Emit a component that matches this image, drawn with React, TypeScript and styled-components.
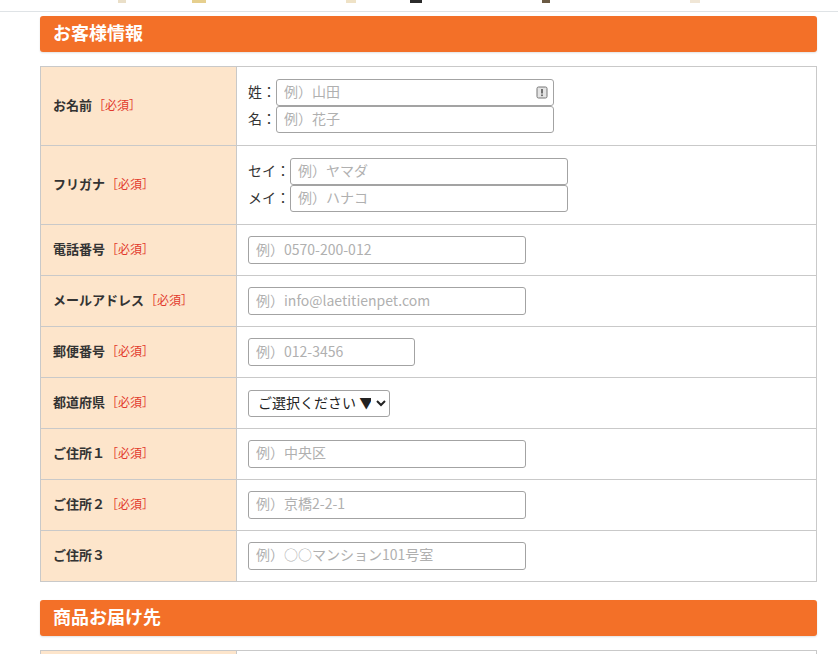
import React from "react";
import styled, { createGlobalStyle } from "styled-components";

const GlobalStyle = createGlobalStyle`
  html, body { margin: 0; padding: 0; background: #fff; }
  body {
    font-family: "Noto Sans CJK JP", "Noto Sans", "Liberation Sans", sans-serif;
    color: #333;
  }
  * { box-sizing: border-box; }
`;

const Page = styled.div`
  width: 838px;
  overflow: hidden;
`;

const TopStrip = styled.div`
  height: 12px;
  border-bottom: 1px solid #dfe3e6;
  display: flex;
  align-items: flex-start;
`;

const StripMark = styled.span<{ $left: number; $w: number; $c: string }>`
  margin-left: ${(p) => p.$left}px;
  width: ${(p) => p.$w}px;
  height: 3px;
  background: ${(p) => p.$c};
  flex: none;
`;

const Content = styled.div`
  padding: 4px 21px 0 40px;
  display: flex;
  flex-direction: column;
`;

const SectionTitle = styled.h2<{ $mt: number }>`
  margin: ${(p) => p.$mt}px 0 14px;
  height: 36px;
  background: #f37028;
  border-radius: 3px;
  color: #fff;
  font-size: 18px;
  font-weight: 700;
  line-height: 33px;
  padding-left: 13px;
  box-shadow: 0 1px 2px rgba(0, 0, 0, 0.12);
`;

const FormTable = styled.table`
  width: 777px;
  border-collapse: collapse;
  border: 1px solid #c9c9c9;
`;

const Th = styled.th`
  width: 196px;
  background: #fde5cb;
  border: 1px solid #c9c9c9;
  text-align: left;
  padding: 0 12px 3px;
  font-size: 13px;
  font-weight: 700;
  color: #333;
  white-space: nowrap;
`;

const Required = styled.span`
  color: #e2392c;
  font-weight: 400;
  font-size: 12px;
  margin-left: 1px;
`;

const Td = styled.td`
  border: 1px solid #c9c9c9;
  padding: 11px 11px;
  vertical-align: middle;
`;

const Stack = styled.div`
  display: grid;
  grid-template-columns: auto auto;
  justify-content: start;
  align-items: center;
  padding: 1px 0;
`;

const SubLabel = styled.span`
  font-size: 14px;
  color: #333;
  white-space: nowrap;
  padding-bottom: 3px;
`;

const FieldWrap = styled.div`
  position: relative;
  width: 278px;
`;

const TextInput = styled.input<{ $w?: number; $h?: number }>`
  display: block;
  width: ${(p) => p.$w ?? 278}px;
  height: ${(p) => p.$h ?? 28}px;
  border: 1px solid #a3a3a3;
  border-radius: 3px;
  padding: 0 7px 3px;
  font-family: inherit;
  font-size: 14px;
  color: #333;
  background: #fff;
  &::placeholder { color: #b0b0b0; }
`;

const AutofillIcon = styled.svg`
  position: absolute;
  right: 6px;
  top: 7px;
`;

const Select = styled.select`
  height: 27px;
  width: 142px;
  border: 1px solid #a3a3a3;
  border-radius: 3px;
  font-family: inherit;
  font-size: 14px;
  color: #222;
  background: #fff;
  padding: 0 2px 2px 5px;
`;

type Row = {
  label: string;
  req: boolean;
  ph: string;
  w?: number;
  kind?: "text" | "select";
};

const rows: Row[] = [
  { label: "電話番号", req: true, ph: "例）0570-200-012" },
  { label: "メールアドレス", req: true, ph: "例）info@laetitienpet.com" },
  { label: "郵便番号", req: true, ph: "例）012-3456", w: 167 },
  { label: "都道府県", req: true, ph: "", kind: "select" },
  { label: "ご住所１", req: true, ph: "例）中央区" },
  { label: "ご住所２", req: true, ph: "例）京橋2-2-1" },
  { label: "ご住所３", req: false, ph: "例）○○マンション101号室" },
];

const Req = () => <Required>［必須］</Required>;

export default function App() {
  return (
    <Page>
      <GlobalStyle />
      <TopStrip>
        <StripMark $left={118} $w={8} $c="#eadfc8" />
        <StripMark $left={66} $w={14} $c="#e6cf8e" />
        <StripMark $left={140} $w={10} $c="#efe2c6" />
        <StripMark $left={54} $w={12} $c="#2b2b2b" />
        <StripMark $left={120} $w={8} $c="#6b5a44" />
        <StripMark $left={140} $w={10} $c="#f0e6d6" />
      </TopStrip>
      <Content>
        <SectionTitle $mt={0}>お客様情報</SectionTitle>
        <FormTable>
          <tbody>
            <tr>
              <Th>
                お名前<Req />
              </Th>
              <Td>
                <Stack>
                  <SubLabel>姓：</SubLabel>
                  <FieldWrap>
                    <TextInput $h={27} placeholder="例）山田" />
                    <AutofillIcon width="12" height="13" viewBox="0 0 12 13">
                      <rect x="1" y="1" width="10" height="11" rx="1.5" fill="#e4e4e4" stroke="#777" strokeWidth="1" />
                      <rect x="5.2" y="3" width="1.6" height="4.5" fill="#555" />
                      <rect x="5.2" y="8.5" width="1.6" height="1.6" fill="#555" />
                    </AutofillIcon>
                  </FieldWrap>
                  <SubLabel>名：</SubLabel>
                  <TextInput $h={27} placeholder="例）花子" />
                </Stack>
              </Td>
            </tr>
            <tr>
              <Th>
                フリガナ<Req />
              </Th>
              <Td>
                <Stack>
                  <SubLabel>セイ：</SubLabel>
                  <TextInput $h={27} placeholder="例）ヤマダ" />
                  <SubLabel>メイ：</SubLabel>
                  <TextInput $h={27} placeholder="例）ハナコ" />
                </Stack>
              </Td>
            </tr>
            {rows.map((r) => (
              <tr key={r.label}>
                <Th>
                  {r.label}
                  {r.req && <Req />}
                </Th>
                <Td>
                  {r.kind === "select" ? (
                    <Select defaultValue="">
                      <option value="">ご選択ください ▼</option>
                    </Select>
                  ) : (
                    <TextInput $w={r.w} placeholder={r.ph} />
                  )}
                </Td>
              </tr>
            ))}
          </tbody>
        </FormTable>
        <SectionTitle $mt={18}>商品お届け先</SectionTitle>
        <FormTable>
          <tbody>
            <tr>
              <Th style={{ height: 40 }}>&nbsp;</Th>
              <Td />
            </tr>
          </tbody>
        </FormTable>
      </Content>
    </Page>
  );
}
